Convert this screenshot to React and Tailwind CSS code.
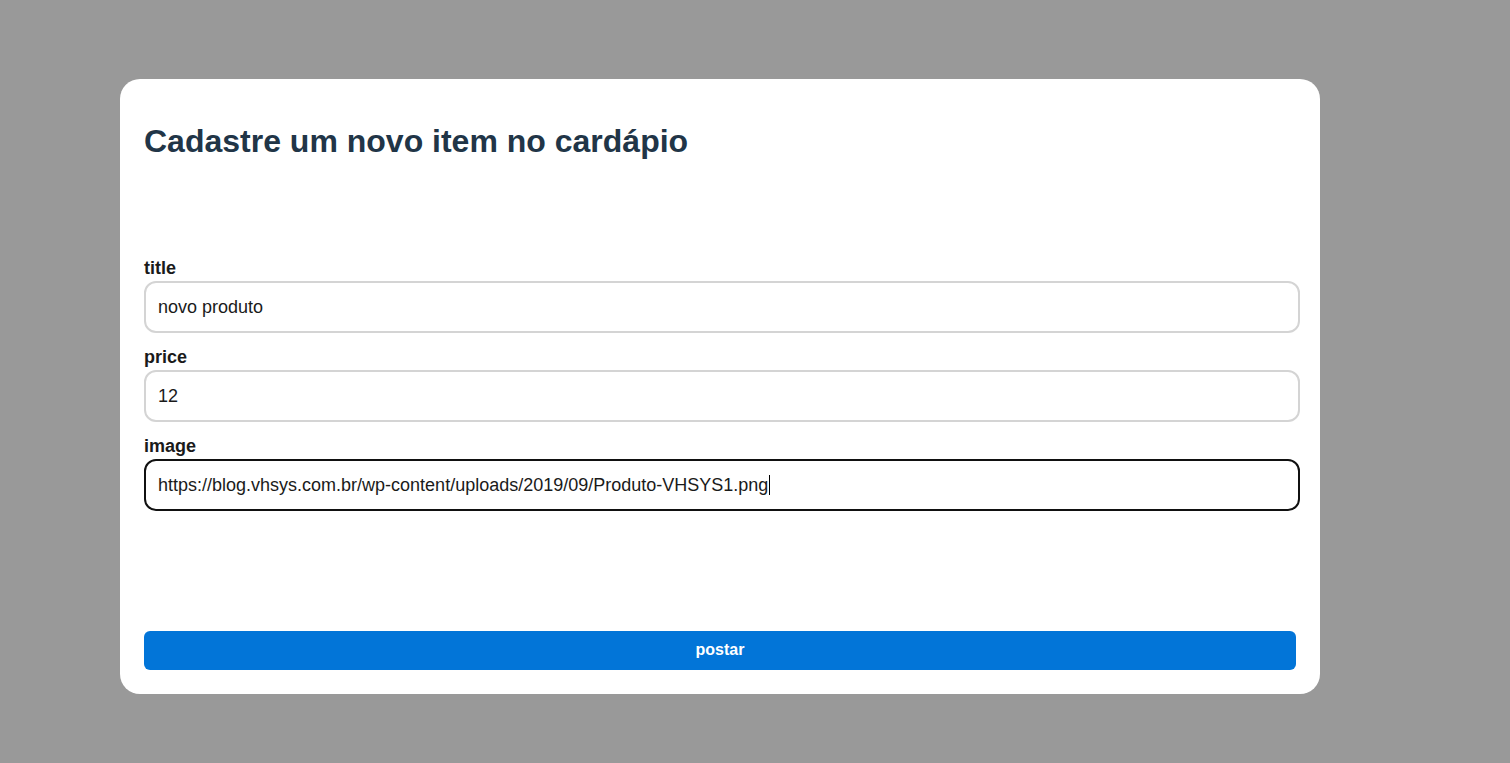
import React from "react";

const fields = [
  { label: "title", value: "novo produto" },
  { label: "price", value: "12" },
  { label: "image", value: "https://blog.vhsys.com.br/wp-content/uploads/2019/09/Produto-VHSYS1.png", focused: true },
];

const App = () => {
  return (
    <div className="min-h-[763px] w-full bg-[#999999] pt-[79px] pl-[120px] font-['Liberation_Sans',Arial,sans-serif]">
      <div className="w-[1200px] rounded-[20px] bg-white px-6 pt-6 pb-6">
        {/* heading */}
        <h1 className="mt-[20px] text-[32px] leading-[37px] font-bold text-[#213547]">
          Cadastre um novo item no cardápio
        </h1>

        {/* form fields */}
        <div className="mt-[96px] flex flex-col">
          {fields.map((f, i) => (
            <div key={f.label} className={i > 0 ? "mt-3" : ""}>
              <label className="block pt-[2px] text-[18px] leading-[21px] font-bold text-[#1a1a1a]">
                {f.label}
              </label>
              <div
                className={
                  "mt-[2px] flex h-[52px] w-[calc(100%+4px)] items-center rounded-[12px] border-2 px-3 text-[18px] text-[#1a1a1a] " +
                  (f.focused ? "border-[#111111]" : "border-[#d4d4d4]")
                }
              >
                <span>{f.value}</span>
                {f.focused && <span className="ml-px inline-block h-[20px] w-px bg-black" />}
              </div>
            </div>
          ))}
        </div>

        <button className="mt-[120px] flex h-[39px] w-full items-center justify-center rounded-[6px] bg-[#0275d8] pb-[2px] text-[16px] font-bold text-white">
          postar
        </button>
      </div>
    </div>
  );
};

export default App;
